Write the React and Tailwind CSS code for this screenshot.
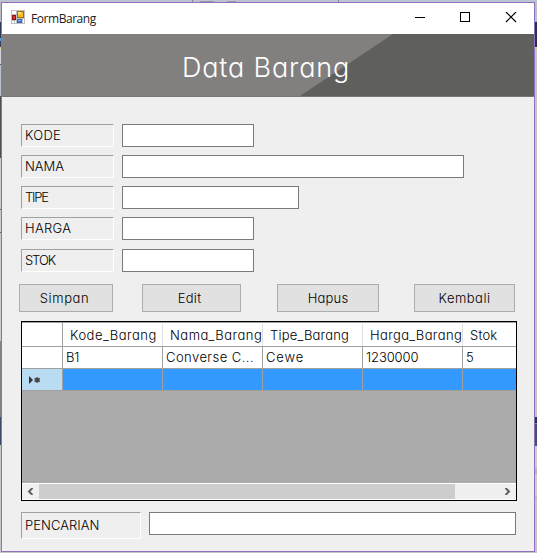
import React from 'react';

const fields = [
  { label: 'KODE', width: 'w-[132px]', gap: 'mb-2', track: 'tracking-[0.3px]' },
  { label: 'NAMA', width: 'w-[342px]', gap: 'mb-2', track: 'tracking-[0px]' },
  { label: 'TIPE', width: 'w-[177px]', gap: 'mb-2', track: 'tracking-[-1.2px]' },
  { label: 'HARGA', width: 'w-[132px]', gap: 'mb-[9px]', track: 'tracking-[0.3px]' },
  { label: 'STOK', width: 'w-[132px]', gap: 'mb-0', track: 'tracking-[-1.1px]' },
];

const buttons = [
  { label: 'Simpan', box: 'w-[94px] pr-[3px]', track: 'tracking-[0.6px]' },
  { label: 'Edit', box: 'w-[99px] ml-[29px] pr-1', track: 'tracking-[0.3px]' },
  { label: 'Hapus', box: 'w-[102px] ml-[36px]', track: 'tracking-[0.2px]' },
  { label: 'Kembali', box: 'w-[101px] ml-[35px]', track: 'tracking-[0.5px]' },
];

const columns = [
  { header: 'Kode_Barang', track: 'tracking-[0.5px]', value: 'B1', valueTrack: 'tracking-[-0.2px]' },
  { header: 'Nama_Barang', track: 'tracking-[0.5px]', value: 'Converse C...', valueTrack: 'tracking-[0.45px]' },
  { header: 'Tipe_Barang', track: 'tracking-[0.2px]', value: 'Cewe', valueTrack: 'tracking-[0.9px]' },
  { header: 'Harga_Barang', track: 'tracking-[0.4px]', value: '1230000', valueTrack: 'tracking-[-0.1px]' },
  { header: 'Stok', track: 'tracking-[0.2px]', value: '5', valueTrack: 'tracking-[0px]' },
];

function Strip({ parts, className }) {
  return (
    <div className={'flex flex-col shrink-0 ' + className}>
      {parts.map((p, i) => <div key={i} className={p} />)}
    </div>
  );
}

const leftParts = [
  'h-[20px] bg-[#b5b9c8]', 'h-[16px] bg-[#2d3858]', 'h-[3px] bg-[#38a5df]', 'h-[6px] bg-[#34405f]',
  'h-[2px] bg-[#e6cf7b]', 'h-[15px] bg-[#d4d4dc]', 'h-px bg-[#555]', 'h-[31px] bg-[#bcc1cf]',
  'h-[62px] bg-[#504c50]', 'h-[51px] bg-[#c9c9d0]', 'h-px bg-[#666]', 'h-[22px] bg-[#c9c9d0]',
  'h-px bg-[#666]', 'h-[108px] bg-[#c9c9d0]', 'h-[76px] bg-[#858188]', 'h-[28px] bg-[#3b4969]', 'h-[105px] bg-[#c5c5ca]',
];
const rightParts = [
  'h-[20px] bg-[#b8bfcd]', 'h-[25px] bg-[#26304f]', 'h-[2px] bg-[#e6cf7b]', 'h-[368px] bg-[#c8c3ca]',
  'h-[6px] bg-[#26304f]', 'h-px bg-[#7784a2]', 'h-[22px] bg-[#435071]', 'h-[22px] bg-[#cccbd0]',
  'h-[6px] bg-[#b6b4c5]', 'h-[23px] bg-[#cccbd0]', 'h-px bg-[#a7a3aa]', 'h-[52px] bg-[#c8c3ca]',
];

function FormIcon() {
  return (
    <svg width="14" height="14" viewBox="0 0 14 14" shapeRendering="crispEdges">
      <rect width="14" height="14" fill="#bfc0c2" />
      <rect x="1" y="1" width="4" height="3" fill="#fff" />
      <rect x="1" y="11" width="2" height="2" fill="#fff" />
      <rect x="4" y="11" width="1" height="2" fill="#fff" />
      <rect x="12" y="9" width="1" height="4" fill="#fff" />
      <rect x="1" y="5" width="4" height="5" fill="#8d1212" />
      <rect x="2" y="6" width="2" height="3" fill="#dc3a27" />
      <rect x="6" y="1" width="7" height="7" fill="#9d7208" />
      <rect x="7" y="2" width="5" height="5" fill="#f7bd28" />
      <rect x="7" y="2" width="3" height="2" fill="#ffe184" />
      <rect x="6" y="9" width="5" height="4" fill="#3d68c4" />
      <rect x="7" y="10" width="3" height="1" fill="#8cb3f4" />
    </svg>
  );
}

function TitleBar() {
  return (
    <div className="flex h-[31px] items-start bg-white">
      <div className="ml-[9px] mt-[7px]"><FormIcon /></div>
      <div className="ml-[6px] mt-[7px] w-[200px] whitespace-nowrap font-['Open_Sans','Noto_Sans',sans-serif] text-[12px] font-normal leading-[17px] tracking-[-0.45px] text-[#222]">FormBarang</div>
      <svg className="ml-[183px] mt-[9px]" width="104" height="12" viewBox="0 0 104 12">
        <g shapeRendering="crispEdges">
          <rect x="1" y="5" width="10" height="1" fill="#000" />
          <rect x="46.5" y="0.5" width="9" height="9" fill="none" stroke="#000" />
        </g>
        <path d="M92 0L102 10M102 0L92 10" stroke="#000" strokeWidth="1.2" />
      </svg>
    </div>
  );
}

function Banner() {
  return (
    <div className="grid h-[63px] border-b border-[#777] bg-[#827f7f]">
      <svg className="col-start-1 row-start-1" width="532" height="62" viewBox="0 0 532 62">
        <path d="M391 0H532V62H298Z" fill="#5f605d" />
      </svg>
      <h1 className="z-10 col-start-1 row-start-1 pl-[180px] pt-[18px] text-[27px] font-light leading-[32px] tracking-[0.85px] text-white whitespace-nowrap">Data Barang</h1>
    </div>
  );
}

const sunken = 'border border-t-[#a0a0a0] border-l-[#a0a0a0] border-r-white border-b-white pl-[3px] whitespace-nowrap';

function DataGrid() {
  return (
    <div className="mt-[9px] ml-[19px] flex h-[180px] w-[496px] flex-col overflow-hidden border border-black bg-[#ababab]">
      <div className="h-px shrink-0 bg-[#a0a0a0]" />
      <div className="flex h-[24px] shrink-0 border-b border-[#a0a0a0] bg-white">
        <div className="w-[41px] shrink-0 border-r border-[#a0a0a0]" />
        {columns.map((c) => (
          <div key={c.header} className={'mt-px w-[100px] shrink-0 overflow-hidden whitespace-nowrap border-r border-[#e0e0e0] pl-[7px] leading-[22px] ' + c.track}>{c.header}</div>
        ))}
      </div>
      <div className="flex h-[22px] shrink-0 border-b border-[#a0a0a0] bg-white">
        <div className="w-[41px] shrink-0 border-r border-[#a0a0a0]" />
        {columns.map((c) => (
          <div key={c.header} className={'w-[100px] shrink-0 overflow-hidden whitespace-nowrap border-r border-[#a0a0a0] pl-[3px] leading-[21px] ' + c.valueTrack}>{c.value}</div>
        ))}
      </div>
      <div className="flex h-[22px] shrink-0 border-b border-[#a0a0a0] bg-[#3399ff]">
        <div className="w-[41px] shrink-0 border-r border-[#a0a0a0] bg-[#badcf3] pl-[7px] pt-[7px]">
          <svg width="12" height="8" viewBox="0 0 12 8">
            <path d="M0 0L4 4L0 8Z" fill="#333" />
            <path d="M8.2 1.2V6.8M5.6 2.5L10.8 5.5M10.8 2.5L5.6 5.5" stroke="#444" strokeWidth="1.7" />
          </svg>
        </div>
        {columns.map((c) => <div key={c.header} className="w-[100px] shrink-0 border-r border-[#a0a0a0]" />)}
      </div>
      <div className="flex-1" />
      <div className="flex h-[17px] shrink-0 items-stretch border-y border-y-white bg-[#f0f0f0]">
        <div className="w-[17px] pl-[5px] pt-[4px]">
          <svg width="7" height="7" viewBox="0 0 7 7"><path d="M5.5 0L2 3.5L5.5 7" fill="none" stroke="#606060" strokeWidth="2" /></svg>
        </div>
        <div className="w-[416px] bg-[#cdcdcd]" />
        <div className="ml-[49px] pt-[4px]">
          <svg width="7" height="7" viewBox="0 0 7 7"><path d="M1.5 0L5 3.5L1.5 7" fill="none" stroke="#606060" strokeWidth="2" /></svg>
        </div>
      </div>
    </div>
  );
}

export default function App() {
  return (
    <div className="flex h-[553px] w-[537px] flex-col overflow-hidden bg-[#c8c3ca] font-[Inter,sans-serif] text-[13px] font-light [font-feature-settings:'cv11'] text-black">
      <div className="flex h-[2px] shrink-0">
        <div className="w-[192px] bg-[#bcc1cf]" />
        <div className="w-px bg-[#858b9c]" />
        <div className="w-[7px] bg-[#bcc1cf]" />
        <div className="mt-px w-[14px] bg-[#9299a8]" />
        <div className="w-[13px] bg-[#bcc1cf]" />
        <div className="mt-px w-[9px] bg-[#9299a8]" />
        <div className="w-[102px] bg-[#bcc1cf]" />
        <div className="w-px bg-[#858b9c]" />
        <div className="flex-1 bg-[#bcc5d4]" />
      </div>
      <div className="flex h-[550px] shrink-0">
        <Strip parts={leftParts} className="w-px overflow-hidden" />
        <div className="flex h-[550px] w-[534px] shrink-0 flex-col border border-[#916fbe] bg-[#efefef]">
          <TitleBar />
          <Banner />
          <div className="mt-[27px] ml-[19px]">
            {fields.map((f) => (
              <div key={f.label} className={'flex gap-2 ' + f.gap}>
                <div className={'h-[23px] w-[93px] leading-[21px] ' + sunken + ' ' + f.track}>{f.label}</div>
                <input aria-label={f.label} className={'h-[23px] border border-[#7a7a7a] bg-white px-1 outline-none ' + f.width} />
              </div>
            ))}
          </div>
          <div className="mt-3 ml-[17px] flex">
            {buttons.map((b) => (
              <button key={b.label} className={'h-[28px] border border-[#adadad] bg-[#e1e1e1] text-center leading-[25px] ' + b.box + ' ' + b.track}>{b.label}</button>
            ))}
          </div>
          <DataGrid />
          <div className="mt-[11px] ml-[19px] flex items-start gap-2">
            <div className={'h-[27px] w-[120px] leading-[25px] tracking-[0.05px] ' + sunken}>PENCARIAN</div>
            <input aria-label="Pencarian" className="h-[23px] w-[367px] border border-[#7a7a7a] bg-white px-1 outline-none" />
          </div>
        </div>
        <Strip parts={rightParts} className="w-[2px] overflow-hidden" />
      </div>
    </div>
  );
}
